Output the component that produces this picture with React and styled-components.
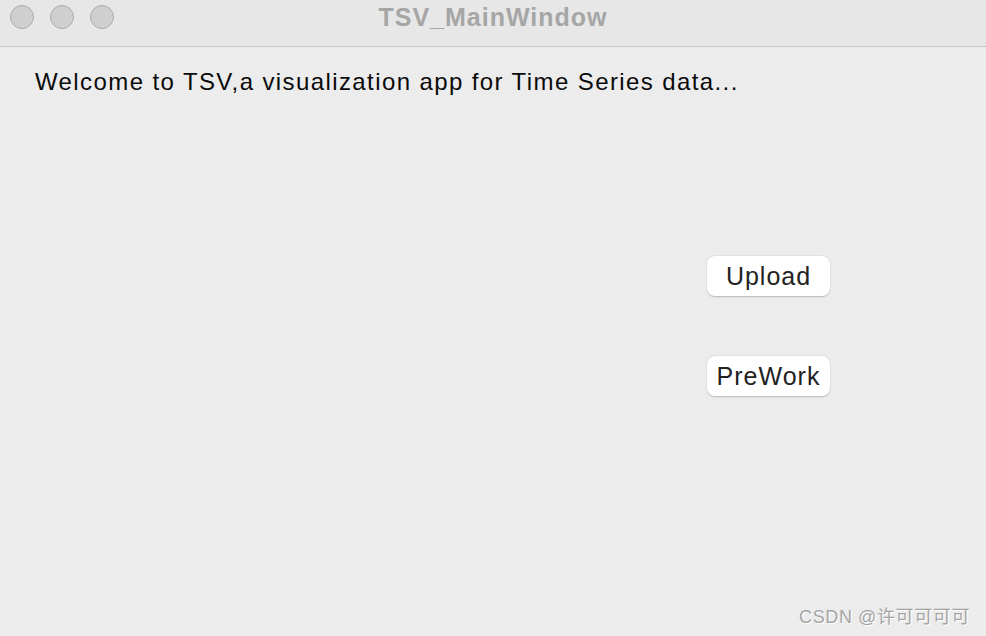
import React from "react";
import styled, { createGlobalStyle } from "styled-components";

const GlobalStyle = createGlobalStyle`
  html, body {
    margin: 0;
    padding: 0;
    width: 986px;
    height: 636px;
    overflow: hidden;
    background: #ececec;
  }
`;

const Window = styled.div`
  position: relative;
  display: flex;
  flex-direction: column;
  width: 986px;
  height: 636px;
  background-color: #ececec;
  font-family: "Liberation Sans", Arial, sans-serif;
`;

const TitleBar = styled.div`
  position: relative;
  display: flex;
  align-items: center;
  justify-content: center;
  height: 46px;
  background-color: #e7e7e7;
  border-bottom: 1px solid #c8c8c8;
  flex-shrink: 0;
`;

const Lights = styled.div`
  position: absolute;
  left: 10px;
  top: 5px;
  display: flex;
  gap: 16px;
`;

const Light = styled.span`
  width: 22px;
  height: 22px;
  border-radius: 50%;
  background-color: #cfcfcf;
  border: 1px solid #ababab;
`;

const Title = styled.div`
  font-size: 25px;
  font-weight: bold;
  color: #a6a6a6;
  letter-spacing: 1px;
  margin-top: -12px;
`;

const Body = styled.div`
  flex: 1;
  display: flex;
  flex-direction: column;
  padding: 19px 0 0 35px;
`;

const Welcome = styled.div`
  font-size: 24px;
  letter-spacing: 1.4px;
  color: #0a0a0a;
  line-height: 32px;
`;

const Actions = styled.div`
  display: flex;
  flex-direction: column;
  align-self: flex-end;
  gap: 60px;
  margin: 158px 156px 0 0;
`;

const Button = styled.button`
  width: 123px;
  height: 40px;
  border: none;
  border-radius: 8px;
  background-color: #ffffff;
  box-shadow: 0 0.5px 1.5px rgba(0, 0, 0, 0.22);
  font-family: "Liberation Sans", Arial, sans-serif;
  font-size: 25px;
  color: #222;
  padding: 0;
  letter-spacing: 1px;
`;

const Watermark = styled.div`
  position: absolute;
  right: 16px;
  bottom: 8px;
  font-family: "Liberation Sans", "Noto Sans CJK SC", sans-serif;
  font-size: 18px;
  letter-spacing: 0.6px;
  color: #a4a4a4;
  text-shadow: 1px 1px 0 #ffffff;
`;

export default function App() {
  return (
    <>
      <GlobalStyle />
      <Window>
        <TitleBar>
          <Lights>
            <Light />
            <Light />
            <Light />
          </Lights>
          <Title>TSV_MainWindow</Title>
        </TitleBar>
        <Body>
          <Welcome>Welcome to TSV,a visualization app for Time Series data...</Welcome>
          <Actions>
            <Button>Upload</Button>
            <Button>PreWork</Button>
          </Actions>
        </Body>
        <Watermark>CSDN @许可可可可</Watermark>
      </Window>
    </>
  );
}
